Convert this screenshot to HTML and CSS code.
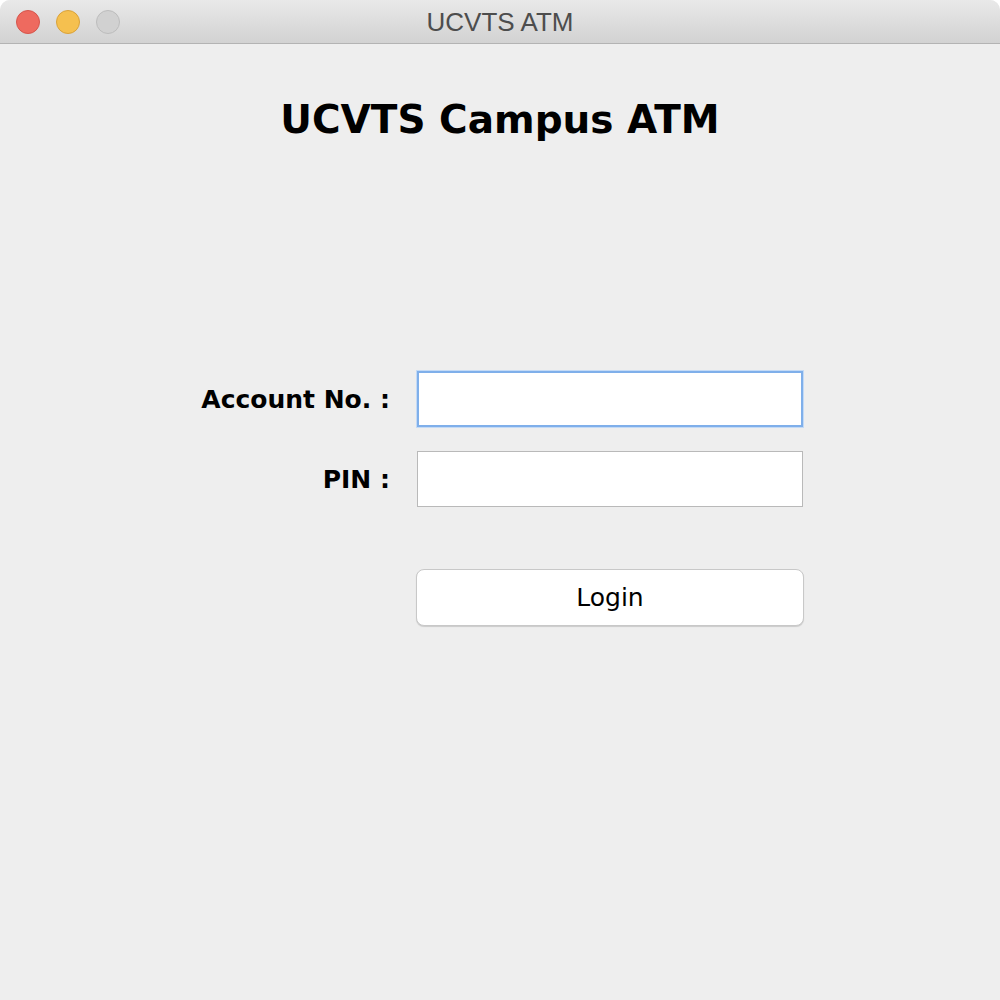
FILE: index.html
```html
<!DOCTYPE html>
<html>
<head>
<meta charset="utf-8">
<link rel="stylesheet" href="styles.css">
</head>
<body>
<div class="window">
  <div class="titlebar">
    <div class="lights">
      <span class="light red"></span>
      <span class="light yellow"></span>
      <span class="light gray"></span>
    </div>
    <div class="wtitle">UCVTS ATM</div>
  </div>
  <div class="content">
    <h1 class="heading">UCVTS Campus ATM</h1>
    <div class="form">
      <label class="label">Account No. :</label>
      <div class="field focused"></div>
      <label class="label">PIN :</label>
      <div class="field"></div>
      <button class="btn">Login</button>
    </div>
  </div>
</div>
</body>
</html>
```
FILE: styles.css
```css
html, body {
  margin: 0;
  padding: 0;
  width: 1000px;
  height: 1000px;
  background: #ffffff;
  overflow: hidden;
}
.window {
  width: 1000px;
  height: 1000px;
  display: flex;
  flex-direction: column;
  background: #eeeeee;
  border-radius: 10px 10px 0 0;
  overflow: hidden;
  font-family: "DejaVu Sans", sans-serif;
}
.titlebar {
  height: 43px;
  flex: none;
  border-bottom: 1px solid #b3b3b3;
  background: linear-gradient(#e9e9e9, #d2d2d2);
  display: flex;
  align-items: center;
  position: relative;
}
.lights {
  display: flex;
  gap: 16px;
  padding-left: 16px;
}
.light {
  width: 24px;
  height: 24px;
  border-radius: 50%;
  box-sizing: border-box;
  display: block;
}
.red { background: #ee6a5f; border: 1px solid #d5554c; }
.yellow { background: #f5c04f; border: 1px solid #d9a23a; }
.gray { background: #d1d1d1; border: 1px solid #bcbcbc; }
.wtitle {
  position: absolute;
  left: 0;
  right: 0;
  top: 0;
  bottom: 0;
  display: flex;
  align-items: center;
  justify-content: center;
  font-family: "Liberation Sans", sans-serif;
  font-size: 26px;
  color: #4d4d4d;
  padding-top: 1px;
}
.content {
  flex: 1;
  display: flex;
  flex-direction: column;
  align-items: center;
}
.heading {
  margin: 50px 0 0 0;
  font-size: 39px;
  font-weight: bold;
  color: #000;
  line-height: 52px;
}
.form {
  margin-top: 225px;
  display: grid;
  grid-template-columns: 212px 386px;
  column-gap: 26px;
  row-gap: 24px;
  align-items: center;
  margin-left: -18px;
}
.label {
  text-align: right;
  font-size: 25px;
  font-weight: bold;
  color: #000;
  padding-right: 1px;
}
.field {
  height: 56px;
  box-sizing: border-box;
  background: #fff;
  border: 1px solid #b9b9b9;
}
.field.focused {
  border: 2px solid #7fafea;
  box-shadow: 0 0 0 1px #c3daf6;
}
.btn {
  grid-column: 2;
  margin-top: 38px;
  margin-left: -1px;
  width: 388px;
  height: 57px;
  background: #ffffff;
  border: 1px solid #c8c8c8;
  border-radius: 8px;
  box-shadow: 0 1px 1px rgba(0,0,0,0.15);
  font-family: "DejaVu Sans", sans-serif;
  font-size: 25px;
  color: #000;
  padding: 0;
}
```
